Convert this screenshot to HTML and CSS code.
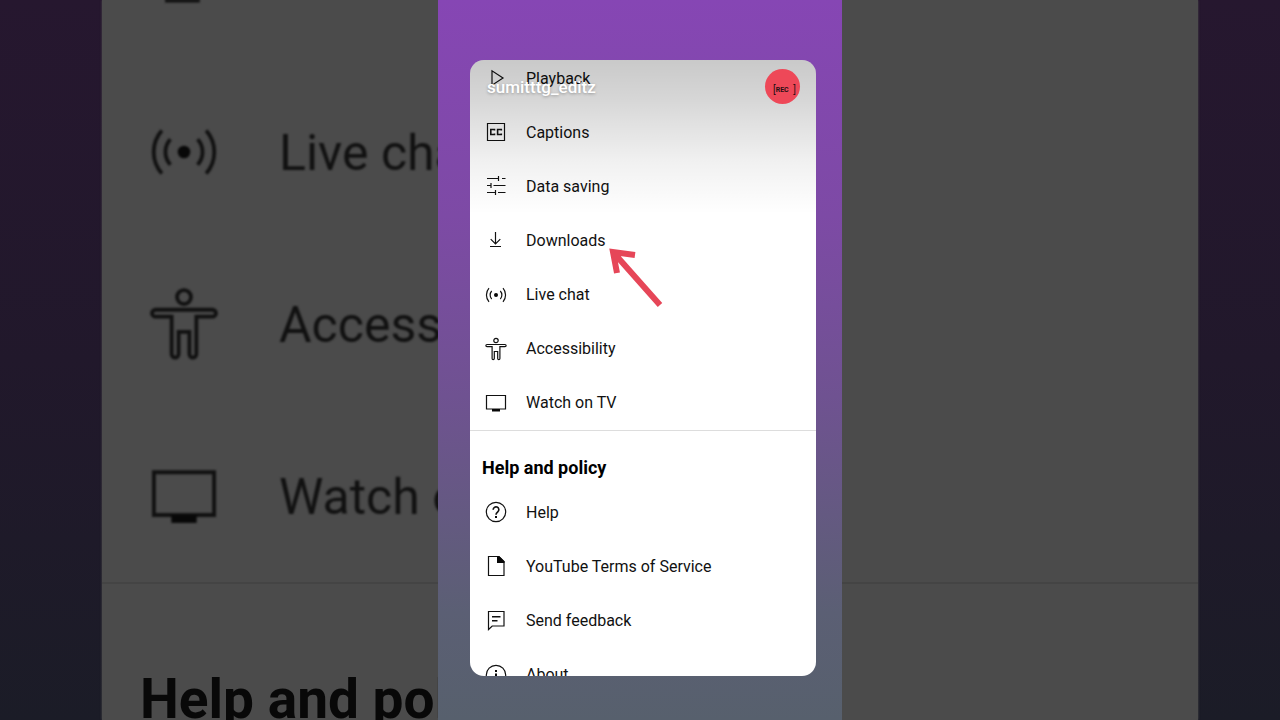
FILE: index.html
```html
<!DOCTYPE html>
<html lang="en">
<head>
    <meta charset="UTF-8">
    <meta name="viewport" content="width=device-width, initial-scale=1.0">
    <title>Settings</title>
    <link rel="stylesheet" href="styles.css">
</head>
<body>

<!-- icons -->
<svg class="sprite" aria-hidden="true">
    <symbol id="i-play" viewBox="0 0 24 24"><path d="M8 4.800v14.400L19 12z"/></symbol>
    <symbol id="i-cc" viewBox="0 0 24 24">
        <path d="M3.500 3.500h17v17h-17z"/>
        <path class="heavy" d="M10.500 10.500V9.500H6.800v5h3.700v-1M17.300 10.500V9.500h-3.700v5h3.700v-1"/>
    </symbol>
    <symbol id="i-tune" viewBox="0 0 24 24">
        <path d="M3 4.500h12M18 4.500h3.500M14.500 2v5M3 11.500h3.500M9.500 11.500h12M7 9v5M3 18.500h8M14 18.500h7.500M11.500 16v5"/>
    </symbol>
    <symbol id="i-download" viewBox="0 0 24 24"><path d="M11.500 4v12M6.700 11.200l4.800 4.800 4.800-4.800M6 18.500h11"/></symbol>
    <symbol id="i-live" viewBox="0 0 24 24">
        <circle class="fill" cx="12" cy="12" r="2"/>
        <path d="M7.700 8a5.900 5.900 0 0 0 0 8M16.300 8a5.900 5.900 0 0 1 0 8M5 5.200a10.300 10.300 0 0 0 0 13.600M19 5.200a10.300 10.300 0 0 1 0 13.600"/>
    </symbol>
    <symbol id="i-person" viewBox="0 0 24 24">
        <circle cx="12" cy="3.500" r="2.200"/>
        <path d="M3 7.500h18a1 1 0 0 1 0 2.200h-5.100v11.800a1.100 1.100 0 0 1-2.200 0v-7h-3.400v7a1.100 1.100 0 0 1-2.200 0V9.700H3a1 1 0 0 1 0-2.200z"/>
    </symbol>
    <symbol id="i-tv" viewBox="0 0 24 24">
        <path d="M2.500 4.500h19v13.500h-19z"/>
        <path class="fill" d="M8 18h8v2.500H8z"/>
    </symbol>
    <symbol id="i-help" viewBox="0 0 24 24">
        <circle cx="12" cy="12" r="9.700"/>
        <path class="heavy" d="M9.200 9.700a2.800 2.800 0 1 1 4.700 2c-1.100 1-1.900 1.500-1.900 3"/>
        <path class="fill" d="M11 16h2v2h-2z"/>
    </symbol>
    <symbol id="i-doc" viewBox="0 0 24 24">
        <path d="M4.500 2.500h10.500l5 5v14H4.500z"/>
        <path class="fill" d="M13 2h2l5.500 5.500V9H13z"/>
    </symbol>
    <symbol id="i-feedback" viewBox="0 0 24 24">
        <path d="M4.500 2.500h15.500v14.500H8.200l-3.700 3.500z"/>
        <path class="heavy" d="M8 7.700h8.500M8 11.700h5.500"/>
    </symbol>
    <symbol id="i-info" viewBox="0 0 24 24">
        <circle cx="12" cy="12" r="9.700"/>
        <path class="fill" d="M11 7h2v2h-2zM11 10.500h2V17h-2z"/>
    </symbol>
</svg>

<!-- enlarged, dimmed copy behind the phone -->
<div class="backdrop" aria-hidden="true">
    <div class="backdrop-panel">
        <div class="big-row"><svg><use href="#i-download"/></svg><span>Downloads</span></div>
        <div class="big-row"><svg><use href="#i-live"/></svg><span>Live chat</span></div>
        <div class="big-row"><svg><use href="#i-person"/></svg><span>Accessibility</span></div>
        <div class="big-row"><svg><use href="#i-tv"/></svg><span>Watch on TV</span></div>
        <div class="big-title">Help and policy</div>
    </div>
</div>

<main class="phone">
    <div class="card">
        <ul class="list main-list">
            <li><a href="#playback"><svg><use href="#i-play"/></svg>Playback</a></li>
            <li><a href="#captions"><svg><use href="#i-cc"/></svg>Captions</a></li>
            <li><a href="#data"><svg><use href="#i-tune"/></svg>Data saving</a></li>
            <li><a href="#downloads"><svg><use href="#i-download"/></svg>Downloads</a></li>
            <li><a href="#chat"><svg><use href="#i-live"/></svg>Live chat</a></li>
            <li><a href="#accessibility"><svg><use href="#i-person"/></svg>Accessibility</a></li>
            <li><a href="#tv"><svg><use href="#i-tv"/></svg>Watch on TV</a></li>
        </ul>
        <h2>Help and policy</h2>
        <ul class="list help-list">
            <li><a href="#help"><svg><use href="#i-help"/></svg>Help</a></li>
            <li><a href="#terms"><svg><use href="#i-doc"/></svg>YouTube Terms of Service</a></li>
            <li><a href="#feedback"><svg><use href="#i-feedback"/></svg>Send feedback</a></li>
            <li><a href="#about"><svg><use href="#i-info"/></svg>About</a></li>
        </ul>

        <div class="overlay">
            <span class="username">sumitttg_editz</span>
            <span class="avatar"><span>[</span><b>REC</b><span class="end">]</span></span>
        </div>
        <svg class="arrow" viewBox="0 0 56 60" aria-hidden="true">
            <path d="M52 58L5 5M27 8L5 5l4 21"/>
        </svg>
    </div>
</main>

</body>
</html>
```

FILE: styles.css
```css
* {
    box-sizing: border-box;
}
body {
    font-family: Roboto, sans-serif;
    background: linear-gradient(to bottom, #26172f, #21182b 50%, #1b1c27);
    color: #111;
    margin: 0;
    height: 100vh;
    overflow: hidden;
    position: relative;
    display: flex;
    justify-content: center;
}
.sprite {
    position: absolute;
    width: 0;
    height: 0;
}
svg {
    fill: none;
    stroke: #111;
    stroke-width: 1.2;
}
.fill {
    fill: #080808;
    stroke: none;
}
.heavy {
    stroke-width: 1.6;
}

/* backdrop */
.backdrop {
    position: absolute;
    inset: 0;
    padding: 0 82px 0 102px;
    overflow: hidden;
}
.backdrop-panel {
    height: 100%;
    background: #4b4b4b;
    box-shadow: 0 0 2px #4b4b4b;
    overflow: hidden;
    display: flex;
    flex-direction: column;
    justify-content: flex-end;
}
.big-row {
    flex: none;
    height: 172px;
    display: flex;
    align-items: center;
    gap: 57px;
    padding-left: 44px;
    font-size: 50px;
    white-space: nowrap;
    filter: blur(1px);
}
.big-row svg {
    width: 76px;
    height: 76px;
}
.big-row span {
    padding-top: 2px;
}
.big-title {
    flex: none;
    height: 138px;
    padding: 82px 0 0 38px;
    border-top: 2px solid #444;
    font-size: 55px;
    line-height: 66px;
    font-weight: 700;
    color: #080808;
    white-space: nowrap;
}

/* phone */
.phone {
    position: relative;
    width: 404px;
    height: 100%;
    padding: 60px 26px 44px 32px;
    background: linear-gradient(to bottom, #8646b4, #7d4aa5 30%, #6f5291 55%, #5b5f74 85%, #57606d);
}
.card {
    position: relative;
    height: 100%;
    background: #fff;
    border-radius: 14px;
    overflow: hidden;
}
.list {
    list-style: none;
    margin: 0;
    padding: 0;
    display: grid;
    grid-auto-rows: 1fr;
}
.main-list {
    height: 379px;
    margin-top: -9px;
}
.help-list {
    height: 217px;
}
.list a {
    height: 100%;
    display: flex;
    align-items: center;
    gap: 18px;
    padding-left: 14px;
    color: #111;
    font-size: 16px;
    text-decoration: none;
}
.list svg {
    width: 24px;
    height: 24px;
}
h2 {
    margin: 0;
    height: 55px;
    padding: 26px 0 0 12px;
    border-top: 1px solid #ddd;
    font-size: 18px;
    line-height: 22px;
    font-weight: 700;
    color: #000;
}
.overlay {
    position: absolute;
    inset: 0 0 auto 0;
    height: 154px;
    padding: 9px 16px 0 17px;
    display: flex;
    justify-content: space-between;
    align-items: flex-start;
    background: linear-gradient(to bottom, rgba(0,0,0,0.21), rgba(0,0,0,0.16) 25%, rgba(0,0,0,0.06) 65%, rgba(0,0,0,0));
    pointer-events: none;
}
.username {
    color: #fff;
    font-size: 17px;
    line-height: 36px;
    font-weight: 500;
    text-shadow: 0 1px 3px rgba(0,0,0,0.3);
}
.avatar {
    width: 35px;
    height: 35px;
    padding: 6px 4px 0 8px;
    border-radius: 50%;
    background: #ee4858;
    display: flex;
    align-items: center;
    font-size: 10px;
    color: #2a1014;
}
.avatar b {
    font-size: 7px;
}
.avatar .end {
    margin-left: auto;
}
.arrow {
    position: absolute;
    left: 138px;
    top: 187px;
    width: 56px;
    height: 60px;
    stroke: #e64658;
    stroke-width: 6;
}
```
